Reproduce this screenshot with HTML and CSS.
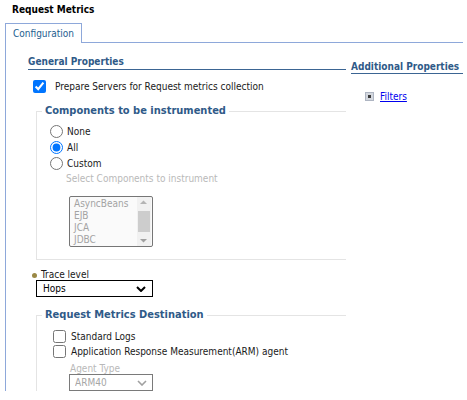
FILE: index.html
```html
<!DOCTYPE html>
<html>
<head>
<meta charset="utf-8">
<link rel="stylesheet" href="styles.css">
</head>
<body>
<div class="title">Request Metrics</div>
<div class="tabbar">
  <div class="tab">Configuration</div>
  <div class="tabfill"></div>
</div>
<div class="panel">
  <div class="main">
    <div class="sect">General Properties</div>
    <label class="chk-row"><input type="checkbox" class="chk" checked><span>Prepare Servers for Request metrics collection</span></label>

    <fieldset class="group">
      <legend>Components to be instrumented</legend>
      <label class="radio-row"><input type="radio" name="comp" class="rad"><span>None</span></label>
      <label class="radio-row"><input type="radio" name="comp" class="rad" checked><span>All</span></label>
      <label class="radio-row"><input type="radio" name="comp" class="rad"><span>Custom</span></label>
      <div class="hint">Select Components to instrument</div>
      <div class="listbox">
        <div class="items">
          <div>AsyncBeans</div>
          <div>EJB</div>
          <div>JCA</div>
          <div>JDBC</div>
        </div>
        <div class="sbar">
          <svg class="arrow" width="13" height="10" viewBox="0 0 13 10"><path d="M3 7 L6.5 3.5 L10 7 Z" fill="#b4b4b4"/></svg>
          <div class="thumb"></div>
          <svg class="arrow down" width="13" height="10" viewBox="0 0 13 10"><path d="M3 3 L6.5 6.5 L10 3 Z" fill="#a0a0a0"/></svg>
        </div>
      </div>
    </fieldset>

    <div class="field-label"><span class="bullet"></span>Trace level</div>
    <select class="sel trace"><option>Hops</option></select>

    <fieldset class="group dest">
      <legend>Request Metrics Destination</legend>
      <label class="cb-row"><input type="checkbox" class="chk"><span>Standard Logs</span></label>
      <label class="cb-row"><input type="checkbox" class="chk"><span>Application Response Measurement(ARM) agent</span></label>
      <div class="agent-label">Agent Type</div>
      <select class="sel agent" disabled><option>ARM40</option></select>
    </fieldset>
  </div>
  <div class="side">
    <div class="side-head">Additional Properties</div>
    <div class="link-row">
      <svg class="expand" width="9" height="9" viewBox="0 0 9 9"><rect x="0.5" y="0.5" width="8" height="8" fill="#d3d7de" stroke="#aeb5c2"/><rect x="3" y="3" width="3" height="3" fill="#3a3a3a"/></svg>
      <a href="#" class="link">Filters</a>
    </div>
  </div>
</div>
</body>
</html>
```
FILE: styles.css
```css
html, body {
  margin: 0;
  padding: 0;
  background: #ffffff;
}
body {
  font-family: "DejaVu Sans Condensed", "DejaVu Sans", sans-serif;
  font-stretch: semi-condensed;
  font-size: 10px;
  color: #1a1a1a;
}
.title {
  padding: 3px 0 0 12px;
  line-height: 13px;
  font-weight: bold;
  color: #000;
}
.tabbar {
  display: flex;
  margin: 7px 4px 0 5px;
  height: 20px;
}
.tab {
  box-sizing: border-box;
  width: 77px;
  height: 20px;
  border: 1px solid #8ea8da;
  border-bottom: none;
  padding: 3px 0 0 7px;
  line-height: 14px;
  color: #245e8f;
}
.tabfill {
  flex: 1;
  border-bottom: 1px solid #8ea8da;
}
.panel {
  display: flex;
  margin-left: 5px;
  border-left: 1px solid #8ea8da;
  height: 348px;
  overflow: hidden;
  padding: 12px 0 0 22px;
  box-sizing: border-box;
}
.main {
  width: 318px;
  flex: none;
}
.side {
  width: 112px;
  margin-left: 5px;
  padding-top: 5px;
}
.sect {
  line-height: 14px;
  font-weight: bold;
  color: #2f5a88;
  border-bottom: 1px solid #3b6593;
}
.side-head {
  line-height: 13px;
  font-weight: bold;
  color: #2f5a88;
  border-bottom: 1px solid #3b6593;
  white-space: nowrap;
}
.chk-row {
  display: flex;
  align-items: center;
  height: 13px;
  margin: 10px 0 0 5px;
}
.chk {
  width: 13px;
  height: 13px;
  margin: 0;
  flex: none;
}
.chk-row span {
  margin-left: 9px;
}
.group {
  margin: 11px 0 0 8px;
  padding: 5px 0 12px 5px;
  border: 1px solid #e4e4e4;
  border-right: none;
  min-width: 0;
}
.group legend {
  padding: 0 3px;
  line-height: 14px;
  font-size: 11px;
  font-weight: bold;
  color: #2f5a88;
}
.radio-row {
  display: flex;
  align-items: center;
  height: 16px;
  margin-left: 8px;
}
.rad {
  width: 13px;
  height: 13px;
  margin: 0;
  flex: none;
}
.radio-row span {
  margin-left: 4px;
}
.hint {
  line-height: 16px;
  margin-left: 24px;
  color: #b9b9b9;
}
.listbox {
  display: flex;
  box-sizing: border-box;
  width: 84px;
  height: 51px;
  margin: 9px 0 0 27px;
  border: 1px solid #767676;
  border-radius: 2px;
  background: #fafafa;
}
.items {
  flex: 1;
  padding: 1px 0 0 4px;
  line-height: 12px;
  color: #a3a3a3;
}
.sbar {
  width: 14px;
  margin-right: 1px;
  display: flex;
  flex-direction: column;
  background: #f1f1f1;
}
.arrow {
  display: block;
  flex: none;
}
.thumb {
  flex: 1;
  margin: 4px 1px;
  background: #cdcdcd;
}
.field-label {
  display: flex;
  align-items: center;
  line-height: 12px;
  margin: 9px 0 0 4px;
}
.bullet {
  width: 5px;
  height: 5px;
  border-radius: 50%;
  background: #9a8845;
  margin-right: 4px;
}
.sel {
  display: block;
  -webkit-appearance: none;
  appearance: none;
  box-sizing: border-box;
  font: inherit;
  border-radius: 0;
  background-repeat: no-repeat;
  outline: none;
}
.trace {
  width: 117px;
  height: 17px;
  margin: -1px 0 0 8px;
  padding: 0 0 0 6px;
  border: 1px solid #000;
  color: #000;
  background-color: #fff;
  background-image: url("data:image/svg+xml;utf8,<svg xmlns='http://www.w3.org/2000/svg' width='10' height='6' viewBox='0 0 10 6'><path d='M1 1 L5 5 L9 1' fill='none' stroke='black' stroke-width='2'/></svg>");
  background-position: 99px 5px;
}
.dest {
  margin-top: 11px;
  padding-top: 7px;
}
.cb-row {
  display: flex;
  align-items: center;
  height: 15px;
  margin-left: 11px;
}
.cb-row span {
  margin-left: 5px;
  white-space: nowrap;
}
.agent-label {
  line-height: 13px;
  margin: 3px 0 0 28px;
  color: #b9b9b9;
}
.agent {
  width: 84px;
  height: 17px;
  margin: -1px 0 0 27px;
  padding: 0 0 0 5px;
  border: 1px solid #7a7a7a;
  color: #a6a6a6;
  background-color: #fff;
  opacity: 1;
  background-image: url("data:image/svg+xml;utf8,<svg xmlns='http://www.w3.org/2000/svg' width='10' height='6' viewBox='0 0 10 6'><path d='M1 1 L5 5 L9 1' fill='none' stroke='%23a0a0a0' stroke-width='1.6'/></svg>");
  background-position: 67px 5px;
}
.link-row {
  display: flex;
  align-items: center;
  margin: 16px 0 0 14px;
  line-height: 13px;
}
.expand {
  display: block;
  flex: none;
  margin-right: 6px;
}
.link {
  color: #0000ee;
  text-decoration: underline;
}
```
